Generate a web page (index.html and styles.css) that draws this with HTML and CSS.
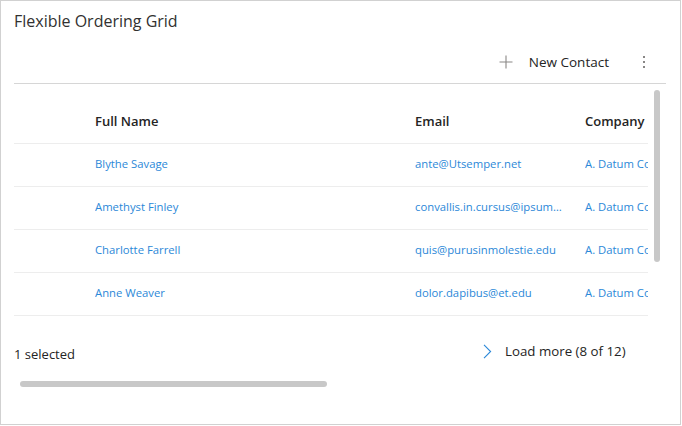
FILE: index.html
```html
<!DOCTYPE html>
<html>
<head>
<meta charset="utf-8">
<link rel="stylesheet" href="styles.css">
</head>
<body>
<div class="card">
  <div class="title">Flexible Ordering Grid</div>
  <div class="commandbar">
    <button class="cmd">
      <svg class="plus" width="14" height="14" viewBox="0 0 14 14"><path d="M7 0.5V13.5M0.5 7H13.5" stroke="#8a8886" stroke-width="1.1" fill="none"/></svg>
      <span>New Contact</span>
    </button>
    <button class="more">
      <svg width="4" height="14" viewBox="0 0 4 14"><circle cx="2" cy="2" r="1"/><circle cx="2" cy="7" r="1"/><circle cx="2" cy="12" r="1"/></svg>
    </button>
  </div>
  <div class="gridwrap">
    <div class="grid">
      <div class="row head">
        <div class="cell sel"></div>
        <div class="cell name">Full Name</div>
        <div class="cell email">Email</div>
        <div class="cell company">Company</div>
      </div>
      <div class="row">
        <div class="cell sel"></div>
        <div class="cell name link">Blythe Savage</div>
        <div class="cell email link">ante@Utsemper.net</div>
        <div class="cell company link">A. Datum Corporation</div>
      </div>
      <div class="row">
        <div class="cell sel"></div>
        <div class="cell name link">Amethyst Finley</div>
        <div class="cell email link">convallis.in.cursus@ipsum.org</div>
        <div class="cell company link">A. Datum Corporation</div>
      </div>
      <div class="row">
        <div class="cell sel"></div>
        <div class="cell name link">Charlotte Farrell</div>
        <div class="cell email link">quis@purusinmolestie.edu</div>
        <div class="cell company link">A. Datum Corporation</div>
      </div>
      <div class="row">
        <div class="cell sel"></div>
        <div class="cell name link">Anne Weaver</div>
        <div class="cell email link">dolor.dapibus@et.edu</div>
        <div class="cell company link">A. Datum Corporation</div>
      </div>
    </div>
    <div class="vscroll"></div>
  </div>
  <div class="footer">
    <div class="selected">1 selected</div>
    <button class="loadmore">
      <svg width="9" height="15" viewBox="0 0 9 15"><path d="M1 0.8L7.6 7.5L1 14.2" stroke="#2b88d8" stroke-width="1.1" fill="none"/></svg>
      <span>Load more (8 of 12)</span>
    </button>
  </div>
  <div class="hscroll-track"><div class="hscroll"></div></div>
</div>
</body>
</html>
```
FILE: styles.css
```css
* { box-sizing: border-box; }
html, body { margin: 0; padding: 0; background: #fff; }
body {
  font-family: "Open Sans", "Noto Sans", sans-serif;
  color: #242424;
  font-size: 13px;
}
.card {
  width: 681px;
  height: 425px;
  border: 1px solid #d1d1d1;
  position: relative;
}
.title {
  font-size: 16px;
  line-height: 22px;
  padding: 9px 0 0 13px;
  color: #323130;
}
.commandbar {
  margin: 0 14px 0 13px;
  height: 52px;
  border-bottom: 1px solid #d6d6d6;
  display: flex;
  justify-content: flex-end;
  align-items: center;
  padding-top: 9px;
}
button {
  font: inherit;
  color: inherit;
  background: none;
  border: 0;
  padding: 0;
  display: flex;
  align-items: center;
}
.cmd { gap: 16px; margin-right: 33px; }
.cmd span { font-size: 13.5px; }
.more { margin-right: 20px; }
.more svg { fill: #605e5c; }
.gridwrap {
  position: relative;
  margin-left: 13px;
  width: 634px;
  padding-top: 17px;
}
.grid { overflow: hidden; }
.row {
  display: grid;
  grid-template-columns: 81px 320px 170px 200px;
  height: 43px;
  border-bottom: 1px solid #ededed;
  align-items: center;
  white-space: nowrap;
  padding-bottom: 3px;
}
.row.head { font-weight: 600; font-size: 13px; padding-bottom: 2px; }
.cell { overflow: hidden; text-overflow: ellipsis; }
.email { padding-right: 23px; }
.company { text-overflow: clip; }
.link { color: #2b88d8; font-size: 11.3px; }
.vscroll {
  position: absolute;
  left: 640px;
  top: 6px;
  width: 6px;
  height: 172px;
  background: #c8c8c8;
  border-radius: 3px;
}
.footer {
  display: flex;
  align-items: center;
  height: 26px;
  margin-top: 25px;
  padding-left: 13px;
}
.selected { width: 469px; }
.loadmore { gap: 13px; font-size: 13.3px; margin-bottom: 6px; }
.hscroll-track { padding: 14px 0 0 19px; }
.hscroll {
  width: 307px;
  height: 6px;
  background: #c8c8c8;
  border-radius: 3px;
}
```
